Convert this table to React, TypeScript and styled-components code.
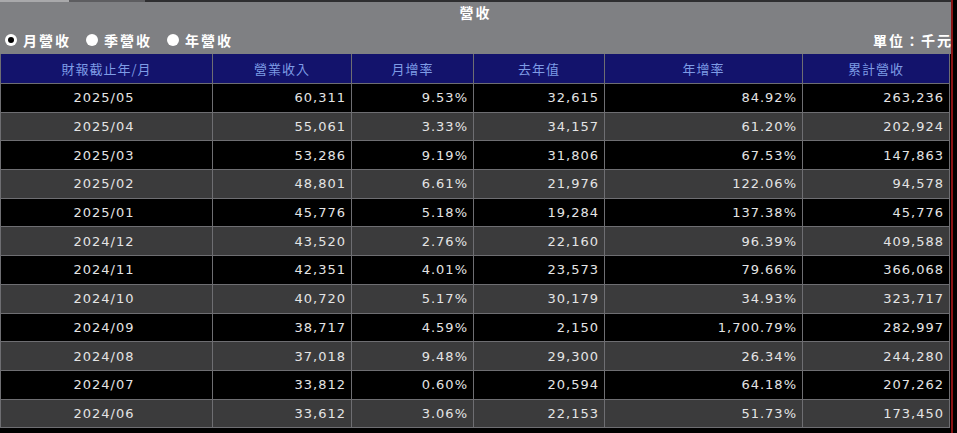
import React from 'react';
import styled, { createGlobalStyle } from 'styled-components';

const GlobalStyle = createGlobalStyle`
  html, body {
    margin: 0;
    padding: 0;
    background: #000;
  }
  #root {
    width: 957px;
    height: 433px;
    overflow: hidden;
  }
`;

const Page = styled.div`
  display: flex;
  width: 957px;
  height: 433px;
  background: #000;
`;

const Main = styled.div`
  width: 951px;
  display: flex;
  flex-direction: column;
  background: #000;
`;

const EdgeLine = styled.div`
  width: 2px;
  background: #8a1414;
`;

const TabStrip = styled.div`
  display: flex;
  height: 2px;
  background: #2e2e30;
`;

interface TabPieceProps {
  w: number;
  tone: string;
}

const TabPiece = styled.div<TabPieceProps>`
  width: ${(p) => p.w}px;
  background: ${(p) => p.tone};
`;

const TopPanel = styled.div`
  background: #7f8083;
  padding-bottom: 1px;
`;

const Title = styled.div`
  height: 24px;
  line-height: 21px;
  text-align: center;
  color: #fff;
  font-family: 'Noto Sans CJK TC', sans-serif;
  font-weight: bold;
  font-size: 14px;
  letter-spacing: 2px;
`;

const OptionBar = styled.div`
  display: flex;
  align-items: center;
  justify-content: space-between;
  height: 27px;
  padding-left: 5px;
  padding-top: 1px;
  box-sizing: border-box;
  color: #fff;
  font-family: 'Noto Sans CJK TC', sans-serif;
  font-weight: bold;
  font-size: 14px;
  letter-spacing: 2px;
`;

const Options = styled.div`
  display: flex;
  align-items: center;
  gap: 15px;
`;

const Option = styled.label`
  display: flex;
  align-items: center;
  gap: 6px;
`;

const Dot = styled.span<{ checked?: boolean }>`
  position: relative;
  width: 12px;
  height: 12px;
  border-radius: 50%;
  background: #fff;
  &::after {
    content: '';
    display: ${(p) => (p.checked ? 'block' : 'none')};
    position: absolute;
    left: 3px;
    top: 3px;
    width: 6px;
    height: 6px;
    border-radius: 50%;
    background: #000;
  }
`;

const Unit = styled.span`
  letter-spacing: 2px;
  margin-right: -2px;
`;

const Table = styled.table`
  width: 949px;
  border-collapse: collapse;
  table-layout: fixed;
  font-family: 'DejaVu Sans', Verdana, sans-serif;
`;

const HeadCell = styled.th`
  height: 29px;
  padding: 0;
  background: #13136c;
  color: #7e9ce6;
  font-family: 'Noto Sans CJK TC', sans-serif;
  font-weight: normal;
  font-size: 13px;
  letter-spacing: 1px;
  text-align: center;
  border: 1px solid #6e6e72;
  border-top: none;
`;

const Row = styled.tr<{ alt: boolean }>`
  background: ${(p) => (p.alt ? '#3b3b3c' : '#000')};
`;

const Cell = styled.td<{ center?: boolean }>`
  height: 27.7px;
  padding: 0 5px 0 0;
  color: #e4e4e4;
  font-size: 13px;
  letter-spacing: 1px;
  text-align: ${(p) => (p.center ? 'center' : 'right')};
  border: 1px solid #6e6e72;
  white-space: nowrap;
`;

const columns = [
  { label: '財報截止年/月', width: 212 },
  { label: '營業收入', width: 139 },
  { label: '月增率', width: 122 },
  { label: '去年值', width: 131 },
  { label: '年增率', width: 198 },
  { label: '累計營收', width: 147 },
];

const rows = [
  ['2025/05', '60,311', '9.53%', '32,615', '84.92%', '263,236'],
  ['2025/04', '55,061', '3.33%', '34,157', '61.20%', '202,924'],
  ['2025/03', '53,286', '9.19%', '31,806', '67.53%', '147,863'],
  ['2025/02', '48,801', '6.61%', '21,976', '122.06%', '94,578'],
  ['2025/01', '45,776', '5.18%', '19,284', '137.38%', '45,776'],
  ['2024/12', '43,520', '2.76%', '22,160', '96.39%', '409,588'],
  ['2024/11', '42,351', '4.01%', '23,573', '79.66%', '366,068'],
  ['2024/10', '40,720', '5.17%', '30,179', '34.93%', '323,717'],
  ['2024/09', '38,717', '4.59%', '2,150', '1,700.79%', '282,997'],
  ['2024/08', '37,018', '9.48%', '29,300', '26.34%', '244,280'],
  ['2024/07', '33,812', '0.60%', '20,594', '64.18%', '207,262'],
  ['2024/06', '33,612', '3.06%', '22,153', '51.73%', '173,450'],
];

export default function App() {
  return (
    <Page>
      <GlobalStyle />
      <Main>
        <TabStrip>
          <TabPiece w={69} tone="#a9a9ab" />
          <TabPiece w={76} tone="#5d5d60" />
        </TabStrip>
        <TopPanel>
          <Title>營收</Title>
          <OptionBar>
            <Options>
              <Option>
                <Dot checked />
                月營收
              </Option>
              <Option>
                <Dot />
                季營收
              </Option>
              <Option>
                <Dot />
                年營收
              </Option>
            </Options>
            <Unit>單位：千元</Unit>
          </OptionBar>
        </TopPanel>
        <Table>
          <colgroup>
            {columns.map((c) => (
              <col key={c.label} style={{ width: c.width }} />
            ))}
          </colgroup>
          <thead>
            <tr>
              {columns.map((c) => (
                <HeadCell key={c.label}>{c.label}</HeadCell>
              ))}
            </tr>
          </thead>
          <tbody>
            {rows.map((r, i) => (
              <Row key={r[0]} alt={i % 2 === 1}>
                {r.map((v, j) => (
                  <Cell key={j} center={j === 0}>
                    {v}
                  </Cell>
                ))}
              </Row>
            ))}
          </tbody>
        </Table>
      </Main>
      <EdgeLine />
    </Page>
  );
}
